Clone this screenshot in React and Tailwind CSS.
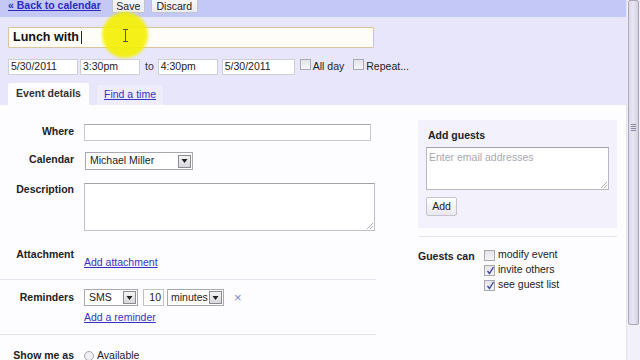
import React from "react";

const F = { fontFamily: '"Liberation Sans", Arial, sans-serif' };

function Check({ checked }) {
  return (
    <span className="relative inline-block w-[11px] h-[11px] border border-[#a8a8b4] bg-gradient-to-b from-[#e4e4ea] to-[#f6f6f8] shrink-0">
      {checked && (
        <svg className="absolute left-[1px] top-[0px]" width="9" height="9" viewBox="0 0 9 9">
          <path d="M1.5 5 L3.5 7.5 L7.5 1" fill="none" stroke="#3a4aa0" strokeWidth="1.4" />
        </svg>
      )}
    </span>
  );
}

function DropBtn() {
  return (
    <span className="w-[13px] h-[13px] border border-[#8a8a94] bg-gradient-to-b from-[#f4f4f4] to-[#d8d8dc] flex items-center justify-center shrink-0">
      <svg width="7" height="4" viewBox="0 0 7 4"><path d="M0.5 0 L6.5 0 L3.5 4 Z" fill="#222" /></svg>
    </span>
  );
}

export default function App() {
  return (
    <div className="w-[640px] h-[360px] overflow-hidden flex bg-white text-[#222] relative" style={F}>
      <div className="w-[626px] flex flex-col">
        {/* header */}
        <div className="h-[17px] bg-[#c3c8f7] flex items-start pl-[8px] shrink-0">
          <a className="text-[10.5px] font-bold text-[#2b2bc2] underline leading-[12px] -mt-[1px]">« Back to calendar</a>
          <div className="ml-[11px] w-[33px] h-[13px] border border-t-0 border-[#c4c4cc] bg-gradient-to-b from-[#f8f8fa] to-[#ececf0] rounded-b-[2px] text-[10.5px] leading-[12px] flex items-start justify-center">Save</div>
          <div className="ml-[6px] w-[47px] h-[13px] border border-t-0 border-[#c4c4cc] bg-gradient-to-b from-[#f8f8fa] to-[#ececf0] rounded-b-[2px] text-[10.5px] leading-[12px] flex items-start justify-center">Discard</div>
        </div>
        {/* lavender */}
        <div className="h-[88px] bg-[#e8e6fb] pl-[8px] pt-[10px] flex flex-col shrink-0">
          <div className="w-[366px] h-[21px] border border-[#dcc49a] bg-[#fffdf7] rounded-[1px] flex items-center pl-[4px]">
            <span className="text-[12.5px] font-bold text-[#111]">Lunch with</span>
            <span className="ml-[2px] w-[1px] h-[13px] bg-[#222]" />
          </div>
          <div className="mt-[11px] h-[16px] flex items-center text-[10.5px]">
            <div className="w-[70px] h-[16px] border border-[#cfcfd8] bg-white pl-[2px] flex items-center">5/30/2011</div>
            <div className="ml-[2px] w-[60px] h-[16px] border border-[#cfcfd8] bg-white pl-[2px] flex items-center">3:30pm</div>
            <span className="ml-[5px] text-[#333]">to</span>
            <div className="ml-[4px] w-[60px] h-[16px] border border-[#cfcfd8] bg-white pl-[2px] flex items-center">4:30pm</div>
            <div className="ml-[4px] w-[73px] h-[16px] border border-[#cfcfd8] bg-white pl-[2px] flex items-center">5/30/2011</div>
            <span className="ml-[5px]"><Check /></span>
            <span className="ml-[2px]">All day</span>
            <span className="ml-[9px]"><Check /></span>
            <span className="ml-[2px]">Repeat...</span>
          </div>
          <div className="mt-auto flex items-end h-[22px]">
            <div className="w-[81px] h-[22px] bg-[#fdfdff] rounded-t-[2px] flex items-center justify-center text-[10.5px] font-bold text-[#333]">Event details</div>
            <div className="ml-[8px] w-[66px] h-[20px] bg-[#eeecfd] rounded-t-[2px] flex items-center justify-center text-[10.5px] text-[#3333c4] underline">Find a time</div>
          </div>
        </div>
        {/* content */}
        <div className="flex-1 bg-[#fdfcff] flex">
          <div className="w-[376px] flex flex-col text-[10.5px]">
            <div className="mt-[19px] grid grid-cols-[74px_1fr] gap-x-[10px] items-start">
              <span className="text-right font-bold leading-[12px] pt-[1px]">Where</span>
              <div className="w-[287px] h-[17px] border border-[#c8c8d0] border-t-[#a8a8b0] bg-white" />
            </div>
            <div className="mt-[11px] grid grid-cols-[74px_1fr] gap-x-[10px] items-start">
              <span className="text-right font-bold leading-[12px] pt-[1px]">Calendar</span>
              <div className="ml-[1px] w-[108px] h-[18px] border border-[#a8a8b0] bg-white flex items-center pl-[4px] pr-[1px]">
                <span className="flex-1">Michael Miller</span>
                <DropBtn />
              </div>
            </div>
            <div className="mt-[13px] grid grid-cols-[74px_1fr] gap-x-[10px] items-start">
              <span className="text-right font-bold leading-[12px] pt-[0px]">Description</span>
              <div className="relative w-[291px] h-[48px] border border-[#c0c0c8] border-t-[#a0a0a8] bg-white">
                <svg className="absolute right-[1px] bottom-[1px]" width="6" height="6" viewBox="0 0 6 6"><path d="M0 6 L6 0 M3 6 L6 3" stroke="#999" strokeWidth="0.8" /></svg>
              </div>
            </div>
            <div className="mt-[17px] grid grid-cols-[74px_1fr] gap-x-[10px] items-start">
              <span className="text-right font-bold leading-[12px]">Attachment</span>
              <a className="mt-[8px] leading-[12px] text-[#3333c4] underline">Add attachment</a>
            </div>
            <div className="mt-[11px] h-[1px] bg-[#e6e4ee]" />
            <div className="mt-[9px] grid grid-cols-[74px_1fr] gap-x-[10px] items-center">
              <span className="text-right font-bold">Reminders</span>
              <div className="flex items-center">
                <div className="w-[54px] h-[17px] border border-[#a8a8b0] bg-white flex items-center pl-[4px] pr-[1px]">
                  <span className="flex-1">SMS</span>
                  <DropBtn />
                </div>
                <div className="ml-[5px] w-[21px] h-[17px] border border-[#c0c0c8] bg-white flex items-center justify-end pr-[2px]">10</div>
                <div className="ml-[3px] w-[57px] h-[17px] border border-[#a8a8b0] bg-white flex items-center pl-[3px] pr-[1px]">
                  <span className="flex-1">minutes</span>
                  <DropBtn />
                </div>
                <span className="ml-[10px] text-[13px] leading-[12px] text-[#7b8bd0]">×</span>
              </div>
            </div>
            <div className="grid grid-cols-[74px_1fr] gap-x-[10px] mt-[5px]">
              <span />
              <a className="text-[#3333c4] underline leading-[12px]">Add a reminder</a>
            </div>
            <div className="mt-[11px] h-[1px] bg-[#e6e4ee]" />
            <div className="mt-[13px] grid grid-cols-[74px_1fr] gap-x-[10px] items-center">
              <span className="text-right font-bold">Show me as</span>
              <div className="flex items-center">
                <span className="w-[10px] h-[10px] rounded-full border border-[#a8a8b0] bg-[#f0f0f4]" />
                <span className="ml-[3px]">Available</span>
              </div>
            </div>
          </div>
          <div className="ml-[42px] w-[199px] flex flex-col text-[10.5px]">
            <div className="mt-[15px] h-[108px] bg-[#f2f1fc] pl-[8px] pt-[9px] flex flex-col">
              <span className="pl-[2px] font-bold leading-[12px]">Add guests</span>
              <div className="relative mt-[6px] w-[183px] h-[43px] border border-[#b8b8c0] border-t-[#a0a0a8] bg-white pl-[2px] pt-[2px] text-[#a8a8b0]">
                Enter email addresses
                <svg className="absolute right-[1px] bottom-[1px]" width="6" height="6" viewBox="0 0 6 6"><path d="M0 6 L6 0 M3 6 L6 3" stroke="#999" strokeWidth="0.8" /></svg>
              </div>
              <div className="mt-[7px] w-[31px] h-[19px] border border-[#c4c4cc] bg-gradient-to-b from-[#ffffff] to-[#e8e8ee] rounded-[2px] flex items-center justify-center">Add</div>
            </div>
            <div className="mt-[8px] h-[1px] bg-[#e6e4ee]" />
            <div className="mt-[12px] flex">
              <span className="font-bold leading-[12px] mt-[1px] w-[66px]">Guests can</span>
              <div className="flex flex-col gap-[3px]">
                <div className="flex items-center h-[12px]"><Check /><span className="ml-[3px]">modify event</span></div>
                <div className="flex items-center h-[12px]"><Check checked /><span className="ml-[3px]">invite others</span></div>
                <div className="flex items-center h-[12px]"><Check checked /><span className="ml-[3px]">see guest list</span></div>
              </div>
            </div>
          </div>
        </div>
      </div>
      {/* scrollbar */}
      <div className="w-[14px] bg-[#f2f0f8] border-l border-[#e4e2ee] flex flex-col">
        <div className="ml-[1px] w-[11px] h-[325px] border border-[#aaa6bc] rounded-[2px] bg-gradient-to-r from-[#dedbea] via-[#e8e6f2] to-[#d4d0e2] flex items-center justify-center">
          <div className="flex flex-col gap-[1px] -mt-[70px]">
            <span className="w-[5px] h-[1px] bg-[#8a86a0]" />
            <span className="w-[5px] h-[1px] bg-[#8a86a0]" />
            <span className="w-[5px] h-[1px] bg-[#8a86a0]" />
            <span className="w-[5px] h-[1px] bg-[#8a86a0]" />
          </div>
        </div>
      </div>
      {/* highlight overlay */}
      <div className="absolute left-[102px] top-[12px] w-[46px] h-[46px] rounded-full bg-[#f4f000] opacity-90 blur-[1.5px] pointer-events-none" />
      <svg className="absolute left-[122px] top-[29px] pointer-events-none" width="7" height="13" viewBox="0 0 7 13">
        <path d="M1 0.5 H6 M3.5 0.5 V12.5 M1 12.5 H6" stroke="#555" strokeWidth="1" fill="none" />
      </svg>
    </div>
  );
}
